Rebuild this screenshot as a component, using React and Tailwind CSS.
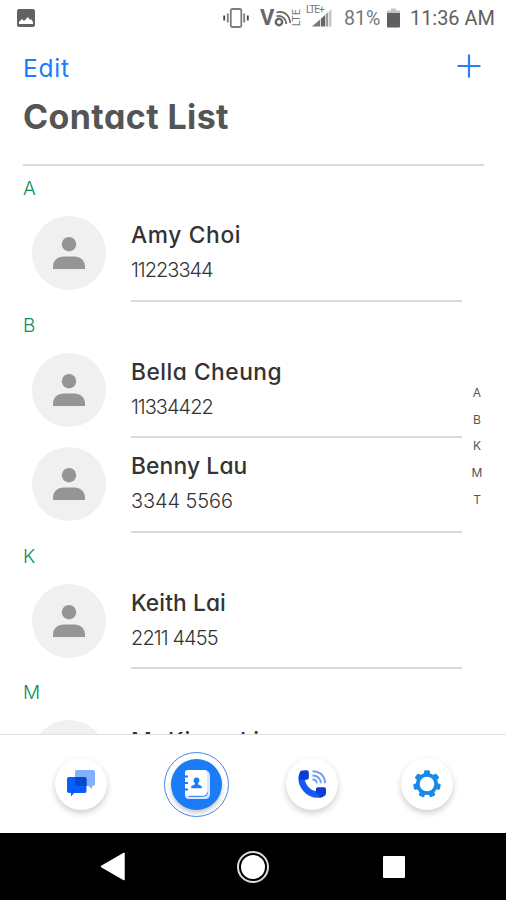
const sections = [
    { letter: 'A', contacts: [{ name: 'Amy Choi', phone: '11223344', nameStyle: 'tracking-[0.65px]', phoneStyle: 'tracking-[-1px]' }] },
    {
        letter: 'B',
        contacts: [
            { name: 'Bella Cheung', phone: '11334422', nameStyle: 'tracking-[0.5px]', phoneStyle: 'tracking-[-1px]' },
            { name: 'Benny Lau', phone: '3344 5566', nameStyle: 'tracking-[0.15px]', phoneStyle: 'tracking-[-0.1px]' },
        ],
    },
    { letter: 'K', contacts: [{ name: 'Keith Lai', phone: '2211 4455', nameStyle: 'tracking-[0.1px]', phoneStyle: 'tracking-[-0.9px]' }] },
    { letter: 'M', contacts: [{ name: 'Mr Kieng Li', phone: '5566 7788', nameStyle: 'pt-[2px] tracking-[0.5px]', phoneStyle: 'tracking-[-0.5px]' }] },
];

const indexLetters = ['A', 'B', 'K', 'M', 'T'];

const StatusBar = () => (
    <div className="flex h-9 shrink-0 items-center pl-[17px] font-['Roboto',sans-serif] text-[#6b6b6b]">
        <svg className="h-[18px] w-[18px]" viewBox="0 0 18 18">
            <rect width="18" height="18" rx="2" fill="#626262" />
            <path d="M2 15V13L5 10L7 12L11 8L13 11L14 10L16 13V15Z" fill="#fff" />
        </svg>

        {/* Vibrate */}
        <svg className="ml-[188px] h-5 w-[26px]" viewBox="0 0 26 20" fill="none" stroke="#7d7d7d" strokeWidth="1.8">
            <rect x="7.8" y="1" width="10.5" height="18" rx="1.5" />
            <path d="M4.8 5.5V14.5M21.2 5.5V14.5" />
            <path d="M1.2 7.5V12.5M24.8 7.5V12.5" stroke="#444" />
        </svg>

        {/* VoLTE */}
        <div className="ml-[11px] flex h-5 items-center">
            <span className="w-[14px] text-[22px] font-bold leading-5 text-[#666]">V</span>
            <svg className="h-5 w-[18px]" viewBox="0 0 18 20" fill="none" stroke="#666">
                <circle cx="5" cy="14" r="3.2" strokeWidth="2.4" />
                <path d="M2.5 8.2C7.5 6.8 12 10 12.2 16" strokeWidth="1.7" />
                <path d="M2.5 4.5C10 2 15.8 7.5 16.2 15" strokeWidth="1.7" />
            </svg>
            <span className="w-[9px] rotate-180 text-[11px] leading-[9px] text-[#777] [writing-mode:vertical-rl]">LTE</span>
        </div>

        {/* Signal strength */}
        <div className="relative ml-[5px] h-5 w-[26px]">
            <span className="absolute left-0 top-[-3px] text-[10px] leading-[10px] tracking-[-0.9px] text-[#777]">LTE+</span>
            <svg className="h-5 w-[26px]" viewBox="0 0 26 20">
                <path d="M6 18.5L14 11.5V18.5Z" fill="#777" />
                <path d="M14.8 10.7L19 7V18.5H14.8Z" fill="#666" />
                <path d="M19.6 6.4L22 4.3V18.5H19.6Z" fill="#999" />
                <path d="M22.6 3.7L25.5 1V18.5H22.6Z" fill="#c8c8c8" />
            </svg>
        </div>

        <span className="ml-[12px] w-[39px] pt-px text-[19.5px] leading-5 text-[#777]">81%</span>
        <svg className="ml-[4px] h-5 w-[13px]" viewBox="0 0 13 20">
            <path d="M4 .5H9V2.5H13V6H0V2.5H4Z" fill="#c4c4c4" />
            <path d="M0 5H13V18.5Q13 19.5 12 19.5H1Q0 19.5 0 18.5Z" fill="#5f5f5f" />
        </svg>
        <span className="ml-[10px] whitespace-nowrap pt-px text-[19.9px] leading-5 text-[#5f5f5f]">11:36 AM</span>
    </div>
);

const Avatar = () => (
    <div className="flex h-[74px] w-[74px] shrink-0 items-center justify-center rounded-full bg-[#f0f0f0]">
        <svg className="h-8 w-8" viewBox="0 0 32 32" fill="#959595">
            <circle cx="16" cy="7.2" r="7.2" />
            <path d="M0 32V29.5C0 23.5 5 19.4 10.5 19.4H21.5C27 19.4 32 23.5 32 29.5V32Z" />
        </svg>
    </div>
);

const ContactRow = ({ contact }) => (
    <div className="flex h-[94.5px] pl-[9.25px] pr-[22px]">
        <div className="pt-[9px]">
            <Avatar />
        </div>
        <div className="ml-[24.75px] flex-1 border-b-2 border-[#d9d9d9] pt-[14px]">
            <p className={`whitespace-nowrap text-[22.75px] font-medium leading-7 text-[#333] ${contact.nameStyle}`}>{contact.name}</p>
            <p className={`mt-[7px] whitespace-nowrap text-[20px] font-light leading-7 text-[#333] ${contact.phoneStyle}`}>{contact.phone}</p>
        </div>
    </div>
);

const TabButton = ({ label, children }) => (
    <div className="flex flex-1 items-center justify-center">
        <button aria-label={label} className="flex h-[52px] w-[52px] items-center justify-center rounded-full bg-white shadow-[0_3px_6px_rgba(0,0,0,0.2)]">
            {children}
        </button>
    </div>
);

const TabBar = () => (
    <div className="flex h-[99px] shrink-0 border-t border-[#e0e0e0] bg-white pl-[23px] pr-[21px]">
        <TabButton label="Messages">
            <svg className="h-7 w-7" viewBox="0 0 28 28">
                <path d="M10 0H26Q28 0 28 2V14Q28 16 26 16H25V19L21.5 16H10Q8 16 8 14V2Q8 0 10 0Z" fill="#80b0ff" />
                <path d="M2 7H17.5Q19.5 7 19.5 9V21Q19.5 23 17.5 23H7L4 26.5V23H2Q0 23 0 21V9Q0 7 2 7Z" fill="#0a5cff" />
                <path d="M8 7H17.5Q19.5 7 19.5 9V16H10Q8 16 8 14Z" fill="#064ac8" />
            </svg>
        </TabButton>

        {/* Active tab */}
        <div className="flex flex-1 items-center justify-center">
            <div className="flex h-[65px] w-[65px] items-center justify-center rounded-full border-[1.5px] border-[#4289ef]">
                <button aria-label="Contacts" className="flex h-[51px] w-[51px] items-center justify-center rounded-full bg-[#1a7cf8] shadow-[0_3px_4px_rgba(0,0,0,0.22)]">
                    <svg className="h-[29px] w-[27px]" viewBox="0 0 27 29">
                        <path d="M5 0H22Q27 1 27 6V24Q27 29 22 29H6Q2 29 2 25V4Q2 0 5 0Z" fill="#d9e8ff" />
                        <path d="M5 0H20Q24 0 24 4V23Q24 26 21 26H5Q2 26 2 23V3Q2 0 5 0Z" fill="#fff" />
                        <path d="M5.5 26.3H20.5Q24.4 26.3 24.4 22.5" fill="none" stroke="#1a7cf8" strokeWidth="1" />
                        <path d="M0 6.5H5M0 13H5M0 19.5H5" stroke="#1a7cf8" strokeWidth="1.8" />
                        <circle cx="13.5" cy="10.5" r="2.9" fill="#1a7cf8" />
                        <path d="M12 12H15V14.2L18.8 16.3V18.3H8.2V16.3L12 14.2Z" fill="#1a7cf8" />
                    </svg>
                </button>
            </div>
        </div>

        <TabButton label="Calls">
            <svg className="h-7 w-7" viewBox="0 0 28 28" fill="none">
                <path d="M4.2 5C1.5 15 11 26.5 23 24.3" stroke="#1459f5" strokeWidth="6.5" />
                <path d="M3 .8Q5.5 -.2 9 .3Q10.8 .6 10.8 2.5V7.8Q10.8 9.8 8.8 9.8H5.5L1 9Q.6 3 3 .8Z" fill="#0b3fd4" />
                <path d="M19.5 17.2H26Q28 17.2 28 19V22.5Q28 27 22 27.5L18 22.5V19Q18 17.2 19.5 17.2Z" fill="#0b3fd4" />
                <path d="M14.5 1.2C22 1.2 27 6 27 13.2M14.5 5.5C19.5 5.5 22.8 8.8 22.8 13.2M14.5 9.5C17 9.5 18.8 11 18.8 13.2" stroke="#6f9df4" strokeWidth="1.9" />
            </svg>
        </TabButton>

        <TabButton label="Settings">
            <svg className="h-7 w-7" viewBox="0 0 28 28">
                <g fill="#1a8ae8">
                    <rect x="11" y="0.3" width="6" height="7" rx="1.5" />
                    <rect x="11" y="0.3" width="6" height="7" rx="1.5" transform="rotate(51.43 14 14)" />
                    <rect x="11" y="0.3" width="6" height="7" rx="1.5" transform="rotate(102.86 14 14)" />
                    <rect x="11" y="0.3" width="6" height="7" rx="1.5" transform="rotate(154.29 14 14)" />
                    <rect x="11" y="0.3" width="6" height="7" rx="1.5" transform="rotate(205.71 14 14)" />
                    <rect x="11" y="0.3" width="6" height="7" rx="1.5" transform="rotate(257.14 14 14)" />
                    <rect x="11" y="0.3" width="6" height="7" rx="1.5" transform="rotate(308.57 14 14)" />
                    <circle cx="14" cy="14" r="11" />
                </g>
                <circle cx="14" cy="14" r="7.3" fill="#fff" />
            </svg>
        </TabButton>
    </div>
);

const SystemNav = () => (
    <div className="flex h-[67px] shrink-0 items-center justify-between bg-black pl-[100px] pr-[101px]">
        <svg className="h-[29px] w-[25px]" viewBox="0 0 25 29">
            <path d="M1.5 14.5L24 1.5V27.5Z" fill="#fff" stroke="#fff" strokeWidth="1.5" strokeLinejoin="round" />
        </svg>
        <div className="ml-[-2px] flex h-8 w-8 items-center justify-center rounded-full border-2 border-[#ddd]">
            <div className="h-6 w-6 rounded-full bg-white" />
        </div>
        <div className="h-[22px] w-[22px] rounded-[1px] bg-white" />
    </div>
);

const App = () => {
    return (
        <div className="flex h-[900px] w-[506px] flex-col overflow-hidden bg-white font-['Inter',sans-serif] [font-feature-settings:'cv11']">
            <StatusBar />

            {/* Header */}
            <header className="ml-[23px] mr-[22px] h-[129.5px] shrink-0 border-b-2 border-[#d9d9d9] text-[#555]">
                <div className="flex h-[60px] items-center justify-between pr-[3.5px]">
                    <button className="pt-[3px] text-[24.5px] leading-8 tracking-[0.8px] text-[#1a7cf8]">Edit</button>
                    <svg className="h-6 w-6" viewBox="0 0 24 24" stroke="#2b7ff5" strokeWidth="2.2">
                        <path d="M12 .5V23.5M.5 12H23.5" />
                    </svg>
                </div>
                <h1 className="whitespace-nowrap text-[34px] font-bold leading-[41px] tracking-[0.4px]">Contact List</h1>
            </header>

            <main className="relative -mt-[0.5px] min-h-0 flex-1 overflow-hidden pl-[23px] pr-[22px]">
                {sections.map((section) => (
                    <section key={section.letter}>
                        <h2 className="h-[42px] pt-[10px] text-[19px] font-light leading-7 text-[#0a8f60]">{section.letter}</h2>
                        {section.contacts.map((contact) => (
                            <ContactRow key={contact.name} contact={contact} />
                        ))}
                    </section>
                ))}

                {/* Alphabet index floats over the list */}
                <div className="absolute right-[19px] top-[215px] flex w-5 flex-col items-center text-[12px] text-[#555]">
                    {indexLetters.map((letter) => (
                        <span key={letter} className="h-[26.7px] leading-[26.7px]">{letter}</span>
                    ))}
                </div>
            </main>

            <TabBar />
            <SystemNav />
        </div>
    );
};

export default App;
